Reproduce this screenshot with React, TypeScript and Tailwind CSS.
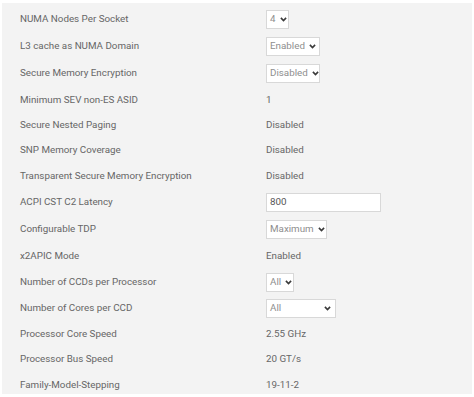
import React from "react";

const Chev = () => (
  <svg width="7" height="5" viewBox="0 0 7 5" className="shrink-0">
    <path d="M0.9 0.9 L3.5 3.6 L6.1 0.9" stroke="#3a3a3a" strokeWidth="1.6" fill="none" />
  </svg>
);

const Sel = ({ text, w, gap }: { text: string; w: number; gap?: boolean }) => (
  <div
    className={`flex items-center h-[19px] border border-[#d8d8d8] bg-white pl-[3px] pr-[4px] text-[#8e8e8e] ${gap ? "justify-between" : "gap-[4px]"}`}
    style={{ width: w }}
  >
    <span>{text}</span>
    <Chev />
  </div>
);

type Row = { label: string; h: number; v: React.ReactNode };

const rows: Row[] = [
  { label: "NUMA Nodes Per Socket", h: 27, v: <Sel text="4" w={23} /> },
  { label: "L3 cache as NUMA Domain", h: 27, v: <Sel text="Enabled" w={54} /> },
  { label: "Secure Memory Encryption", h: 27, v: <Sel text="Disabled" w={54} /> },
  { label: "Minimum SEV non-ES ASID", h: 26, v: "1" },
  { label: "Secure Nested Paging", h: 25, v: "Disabled" },
  { label: "SNP Memory Coverage", h: 25, v: "Disabled" },
  { label: "Transparent Secure Memory Encryption", h: 26, v: "Disabled" },
  {
    label: "ACPI CST C2 Latency",
    h: 27,
    v: (
      <div className="flex items-center h-[19px] w-[115px] border border-[#d8d8d8] bg-white pl-[3px] text-[#555]">
        800
      </div>
    ),
  },
  { label: "Configurable TDP", h: 27, v: <Sel text="Maximum" w={61} /> },
  { label: "x2APIC Mode", h: 26, v: "Enabled" },
  { label: "Number of CCDs per Processor", h: 26, v: <Sel text="All" w={28} /> },
  { label: "Number of Cores per CCD", h: 26, v: <Sel text="All" w={70} gap /> },
  { label: "Processor Core Speed", h: 26, v: "2.55 GHz" },
  { label: "Processor Bus Speed", h: 25, v: "20 GT/s" },
  { label: "Family-Model-Stepping", h: 26, v: "19-11-2" },
];

export default function App() {
  return (
    <div className="w-[474px] h-[397px] bg-white overflow-hidden" style={{ fontFamily: "Roboto, 'Liberation Sans', sans-serif" }}>
      <div className="ml-[2px] mt-[3px] w-[470px] h-[391px] bg-[#f3f3f3] pt-[3px] text-[9.8px] font-normal text-[#666666]">
        {rows.map((r, i) => (
          <div key={i} className="flex items-center" style={{ height: r.h }}>
            <div className="w-[264px] pl-[18px]">{r.label}</div>
            <div>{r.v}</div>
          </div>
        ))}
      </div>
    </div>
  );
}
